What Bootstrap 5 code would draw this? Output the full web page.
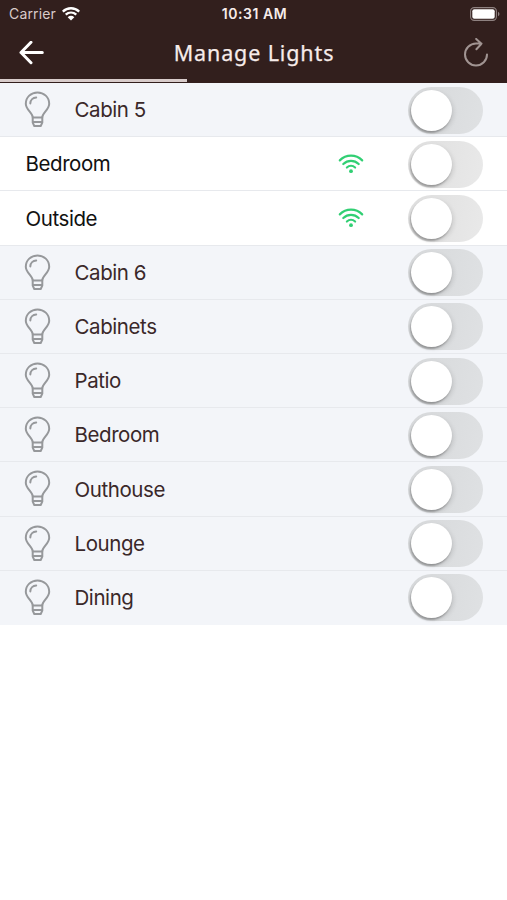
<!DOCTYPE html>
<html lang="en">
<head>
<meta charset="utf-8">
<meta name="viewport" content="width=device-width, initial-scale=1">
<title>Manage Lights</title>
<link href="https://cdn.jsdelivr.net/npm/bootstrap@5.3.0/dist/css/bootstrap.min.css" rel="stylesheet">
<style>
  body { font-family: Inter, "Liberation Sans", sans-serif; background: #fff; overflow: hidden; }
  svg { display: block; flex: none; }
  .app-head { background: #321f1d; height: 83px; color: #f7ecea; }
  .status { height: 27px; padding: 0 7px 0 9px; font-size: 14px; line-height: 27px; display: grid; grid-template-columns: 1fr auto 1fr; }
  .carrier { color: #d9cbc9; letter-spacing: .15px; gap: 6px; }
  .clock { font-weight: 600; font-size: 14px; letter-spacing: .55px; }
  .titlebar { height: 52px; padding: 0 18px 0 18px; }
  .titlebar h1 { font: 400 21.5px/52px "Noto Sans", sans-serif; letter-spacing: .88px; height: 52px; -webkit-text-stroke: .25px #f7ecea; }
  .loader { height: 3px; width: 187px; background: #d8cccb; }
  .light { height: 54.2px; padding: 0 24px 0 24px; background: #f3f5f9; border-bottom: 1px solid #e7e9ed; color: #3a2829; font-size: 20.5px; letter-spacing: -.42px; }
  .light > span { padding-top: 2px; }
  .light:last-child { border-bottom-color: #f3f5f9; }
  .light.online { background: #fff; color: #111; padding-left: 25.5px; }
  .bulb { margin-left: -.5px; margin-right: 24px; color: #96989b; }
  .signal { color: #31cf73; margin-right: 44.5px; }
  .light .toggle { width: 75px; height: 47px; border: 0; border-radius: 24px; background: linear-gradient(100deg, #d6d8da, #dfe1e3); margin: 1px 0 0; padding: 0 0 0 3px; }
  .light.online .toggle { background: linear-gradient(100deg, #dedede, #e9e9e9); }
  .knob { width: 41px; height: 41px; border-radius: 50%; background: #fff; box-shadow: -1px 2px 2px rgba(0,0,0,.28), 2px 2px 4px rgba(0,0,0,.1); }
</style>
</head>
<body>
<svg width="0" height="0" class="position-absolute" aria-hidden="true">
  <symbol id="bulb" viewBox="0 0 26 37">
    <g fill="none" stroke="currentColor" stroke-width="2" stroke-linecap="round" stroke-linejoin="round">
      <path d="M8.3 26.5C8.1 21.5 1.3 18.8 1.3 12.8C1.3 6.2 6.5 1.4 13 1.4S24.7 6.2 24.7 12.8C24.7 18.8 17.9 21.5 17.7 26.5Z"/>
      <path d="M8.2 26.5V31.6L9.8 35H16.2L17.8 31.6V26.5M8.3 31H17.7M5.8 12.4C6 9.1 8.5 6.8 11.7 6.6"/>
    </g>
  </symbol>
  <symbol id="signal" viewBox="0 0 25 20">
    <g fill="none" stroke="currentColor" stroke-width="2.2" stroke-linecap="round">
      <path d="M1.3 6.4C7.6 .1 17.4 .1 23.7 6.4M4.8 10C9.2 5.9 15.8 5.9 20.2 10M8.4 13.5C10.8 11.4 14.2 11.4 16.6 13.5"/>
    </g>
    <circle cx="12.5" cy="17.2" r="1.9" fill="currentColor"/>
  </symbol>
</svg>

<header class="app-head d-flex flex-column">
  <div class="status">
    <div class="carrier d-flex align-items-center">Carrier
      <svg width="18" height="14" viewBox="0 0 18 14">
        <path d="M.8 4.6C5.5 .1 12.5 .1 17.2 4.6M3.7 7.7C6.8 4.8 11.2 4.8 14.3 7.7" fill="none" stroke="#fff" stroke-width="2.3"/>
        <path d="M5.7 10.2C7.6 8.4 10.4 8.4 12.3 10.2L9 13.5Z" fill="#fff"/>
      </svg>
    </div>
    <div class="clock">10:31 AM</div>
    <div class="d-flex align-items-center justify-content-end">
      <svg width="30" height="14" viewBox="0 0 30 14">
        <rect x=".6" y=".6" width="25.8" height="12.8" rx="3.6" fill="none" stroke="#8e8180" stroke-width="1.1"/>
        <rect x="2.3" y="2.3" width="22.4" height="9.4" rx="2" fill="#fff"/>
        <path d="M28 4.8C30 5.6 30 8.4 28 9.2Z" fill="#8e8180"/>
      </svg>
    </div>
  </div>
  <div class="titlebar d-flex align-items-center justify-content-between">
    <svg width="27" height="24" viewBox="0 0 27 24"><path d="M13 1.3L3 11.5L13 21.7M3 11.5H24.3" fill="none" stroke="#fff" stroke-width="3" stroke-linecap="round" stroke-linejoin="round"/></svg>
    <h1 class="m-0">Manage Lights</h1>
    <svg width="26" height="30" viewBox="0 0 26 30"><path d="M24 16.5A11 11 0 1 1 13 5.5H18.5M13.2 .9L18.5 5.7L13.4 11.2" fill="none" stroke="#a19492" stroke-width="2" stroke-linecap="round" stroke-linejoin="round"/></svg>
  </div>
  <div class="loader"></div>
</header>

<main>
  <div class="light d-flex align-items-center"><svg class="bulb" width="27" height="37"><use href="#bulb"/></svg><span>Cabin 5</span><button class="toggle ms-auto d-flex align-items-center" aria-label="Cabin 5"><span class="knob"></span></button></div>
  <div class="light online d-flex align-items-center"><span>Bedroom</span><svg class="signal ms-auto" width="26" height="20"><use href="#signal"/></svg><button class="toggle d-flex align-items-center" aria-label="Bedroom"><span class="knob"></span></button></div>
  <div class="light online d-flex align-items-center"><span>Outside</span><svg class="signal ms-auto" width="26" height="20"><use href="#signal"/></svg><button class="toggle d-flex align-items-center" aria-label="Outside"><span class="knob"></span></button></div>
  <div class="light d-flex align-items-center"><svg class="bulb" width="27" height="37"><use href="#bulb"/></svg><span>Cabin 6</span><button class="toggle ms-auto d-flex align-items-center" aria-label="Cabin 6"><span class="knob"></span></button></div>
  <div class="light d-flex align-items-center"><svg class="bulb" width="27" height="37"><use href="#bulb"/></svg><span>Cabinets</span><button class="toggle ms-auto d-flex align-items-center" aria-label="Cabinets"><span class="knob"></span></button></div>
  <div class="light d-flex align-items-center"><svg class="bulb" width="27" height="37"><use href="#bulb"/></svg><span>Patio</span><button class="toggle ms-auto d-flex align-items-center" aria-label="Patio"><span class="knob"></span></button></div>
  <div class="light d-flex align-items-center"><svg class="bulb" width="27" height="37"><use href="#bulb"/></svg><span>Bedroom</span><button class="toggle ms-auto d-flex align-items-center" aria-label="Bedroom"><span class="knob"></span></button></div>
  <div class="light d-flex align-items-center"><svg class="bulb" width="27" height="37"><use href="#bulb"/></svg><span>Outhouse</span><button class="toggle ms-auto d-flex align-items-center" aria-label="Outhouse"><span class="knob"></span></button></div>
  <div class="light d-flex align-items-center"><svg class="bulb" width="27" height="37"><use href="#bulb"/></svg><span>Lounge</span><button class="toggle ms-auto d-flex align-items-center" aria-label="Lounge"><span class="knob"></span></button></div>
  <div class="light d-flex align-items-center"><svg class="bulb" width="27" height="37"><use href="#bulb"/></svg><span>Dining</span><button class="toggle ms-auto d-flex align-items-center" aria-label="Dining"><span class="knob"></span></button></div>
</main>
<script src="https://cdn.jsdelivr.net/npm/bootstrap@5.3.0/dist/js/bootstrap.bundle.min.js"></script>
</body>
</html>
